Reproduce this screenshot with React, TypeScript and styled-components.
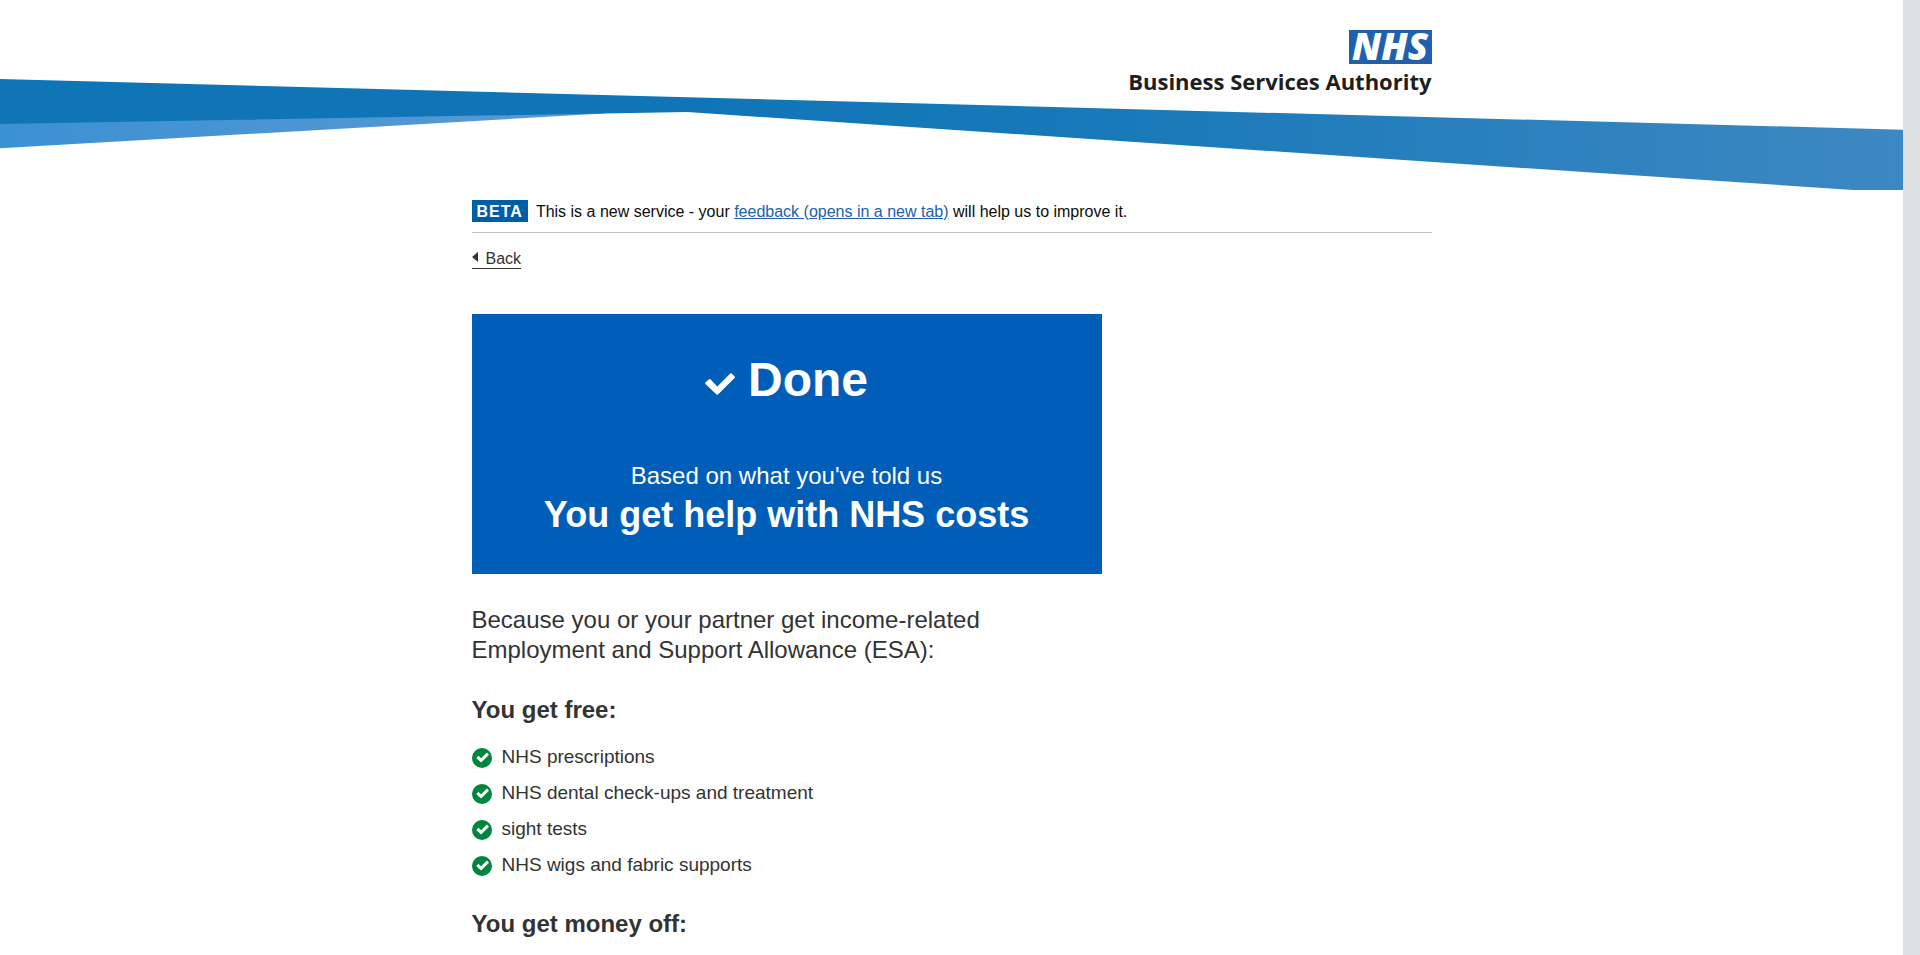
import React from "react";
import styled, { createGlobalStyle } from "styled-components";

const sans = `"Liberation Sans", Arial, Helvetica, sans-serif`;

const GlobalStyle = createGlobalStyle`
  *, *::before, *::after { box-sizing: border-box; }
  html { background: #dee0e2; }
  body {
    margin: 0;
    overflow: hidden;
    font-family: ${sans};
    font-size: 16px;
    color: #333333;
  }
  h1, h2, p, ul { margin: 0; padding: 0; font: inherit; }
`;

const Page = styled.div`
  height: 100vh;
  overflow: hidden;
  margin-right: 17px;
  background: #ffffff;
`;

const Header = styled.header`
  display: grid;
  height: 190px;
  > * { grid-area: 1 / 1; }
`;

const Swoosh = styled.svg`
  display: block;
  align-self: end;
  width: 100%;
  height: 112px;
`;

const Container = styled.div`
  width: 100%;
  max-width: 960px;
  margin: 0 auto;
`;

const Brand = styled(Container)`
  display: flex;
  flex-direction: column;
  align-items: flex-end;
  padding-top: 30px;
  font-family: "Open Sans", "Noto Sans", sans-serif;
`;

const BrandBox = styled.span`
  display: flex;
  align-items: center;
  justify-content: center;
  width: 83px;
  height: 34px;
  padding-bottom: 2px;
  background: #2060ae;
  color: #ffffff;
  font-size: 37px;
  font-weight: 800;
  font-style: italic;
  line-height: 32px;
`;

const BrandName = styled.span`
  margin-top: 1px;
  color: #1e1e1e;
  font-size: 22px;
  font-weight: 700;
  line-height: 32px;
`;

const PhaseBanner = styled.div`
  display: flex;
  align-items: center;
  gap: 8px;
  padding: 10px 0;
  border-bottom: 1px solid #bfc1c3;
  color: #0b0c0c;
  line-height: 20px;
`;

const PhaseTag = styled.strong`
  padding: 2px 5px 0;
  background: #005ea5;
  color: #ffffff;
  letter-spacing: 1px;
`;

const PhaseText = styled.span`
  padding-top: 2px;
`;

const FeedbackLink = styled.a`
  color: #2060ae;
`;

const BackLink = styled.a`
  display: inline-flex;
  align-items: center;
  gap: 8px;
  margin: 16px 0 45px;
  border-bottom: 1px solid #333333;
  color: #333333;
  line-height: 19px;
  text-decoration: none;
  vertical-align: top;
`;

const BackArrow = styled.svg`
  margin-bottom: 3px;
`;

const Column = styled.main`
  max-width: 630px;
`;

const Panel = styled.section`
  padding: 38px 30px 36px;
  background: #005eb8;
  color: #ffffff;
  text-align: center;
`;

const PanelTitle = styled.h1`
  display: flex;
  align-items: center;
  justify-content: center;
  gap: 13px;
  margin-bottom: 52px;
  font-size: 48px;
  font-weight: 700;
  line-height: 56px;
`;

const PanelLead = styled.p`
  font-size: 24px;
  line-height: 32px;
`;

const PanelResult = styled.p`
  font-size: 36px;
  font-weight: 700;
  line-height: 46px;
`;

const Lead = styled.p`
  max-width: 560px;
  margin-top: 31px;
  font-size: 24px;
  line-height: 30px;
`;

const Heading = styled.h2`
  margin-top: 30px;
  font-size: 24px;
  font-weight: 700;
  line-height: 30px;
`;

const List = styled.ul`
  display: grid;
  gap: 11px;
  margin: 19px 0 32px;
  list-style: none;
  font-size: 19px;
  line-height: 25px;
`;

const Item = styled.li`
  display: flex;
  align-items: center;
  gap: 10px;
`;

const ItemIcon = styled.svg`
  flex: none;
  margin-top: 2px;
`;

const TitleIcon = styled.svg`
  margin-top: 8px;
`;

const freeItems = [
  "NHS prescriptions",
  "NHS dental check-ups and treatment",
  "sight tests",
  "NHS wigs and fabric supports",
];

const Tick = () => (
  <ItemIcon width="20" height="20" viewBox="0 0 20 20" aria-hidden="true">
    <circle cx="10" cy="10" r="10" fill="#00853f" />
    <path d="M4.2 10 6.4 7.8 9.1 10.3 14.9 4.6 17 6.8 9.1 14.6Z" fill="#fff" />
  </ItemIcon>
);

export default function App() {
  return (
    <>
      <GlobalStyle />
      <Page>
        <Header>
          <Swoosh viewBox="0 78 1903 112" preserveAspectRatio="none" aria-hidden="true">
            <defs>
              <linearGradient id="band" gradientUnits="userSpaceOnUse" x1="687" y1="0" x2="1903" y2="0">
                <stop offset="0" stopColor="#0f75b7" />
                <stop offset="0.35" stopColor="#1979b8" />
                <stop offset="1" stopColor="#3d88c3" />
              </linearGradient>
              <linearGradient id="under" gradientUnits="userSpaceOnUse" x1="0" y1="0" x2="604" y2="0">
                <stop offset="0" stopColor="#3c91d2" />
                <stop offset="1" stopColor="#5b99d5" />
              </linearGradient>
            </defs>
            <path d="M0 120V148.3L604 113.5V108Z" fill="url(#under)" />
            <path d="M0 79 1903 129.7V190H1853L687 112 0 124Z" fill="url(#band)" />
          </Swoosh>
          <Brand>
            <BrandBox>NHS</BrandBox>
            <BrandName>Business Services Authority</BrandName>
          </Brand>
        </Header>
        <Container>
          <PhaseBanner>
            <PhaseTag>BETA</PhaseTag>
            <PhaseText>
              This is a new service - your{" "}
              <FeedbackLink href="#feedback">feedback (opens in a new tab)</FeedbackLink> will help
              us to improve it.
            </PhaseText>
          </PhaseBanner>
          <BackLink href="#back">
            <BackArrow width="6" height="10" viewBox="0 0 6 10" aria-hidden="true">
              <path d="M6 0V10L0 5Z" fill="#333" />
            </BackArrow>
            Back
          </BackLink>
          <Column>
            <Panel>
              <PanelTitle>
                <TitleIcon width="30" height="22" viewBox="0 0 30 22" aria-hidden="true">
                  <path
                    d="M0.4 9.6 4 6.2Q4.7 5.7 5.4 6.3L12.3 13.4 25.3 0.5Q26 0 26.7 0.6L29.7 3.6Q30.2 4.3 29.6 5L13 21.5Q12.3 22.2 11.6 21.5L0.4 11Q-0.2 10.3 0.4 9.6Z"
                    fill="#fff"
                  />
                </TitleIcon>
                Done
              </PanelTitle>
              <PanelLead>Based on what you've told us</PanelLead>
              <PanelResult>You get help with NHS costs</PanelResult>
            </Panel>
            <Lead>
              Because you or your partner get income-related Employment and Support Allowance (ESA):
            </Lead>
            <Heading>You get free:</Heading>
            <List>
              {freeItems.map((item) => (
                <Item key={item}>
                  <Tick />
                  {item}
                </Item>
              ))}
            </List>
            <Heading>You get money off:</Heading>
          </Column>
        </Container>
      </Page>
    </>
  );
}
